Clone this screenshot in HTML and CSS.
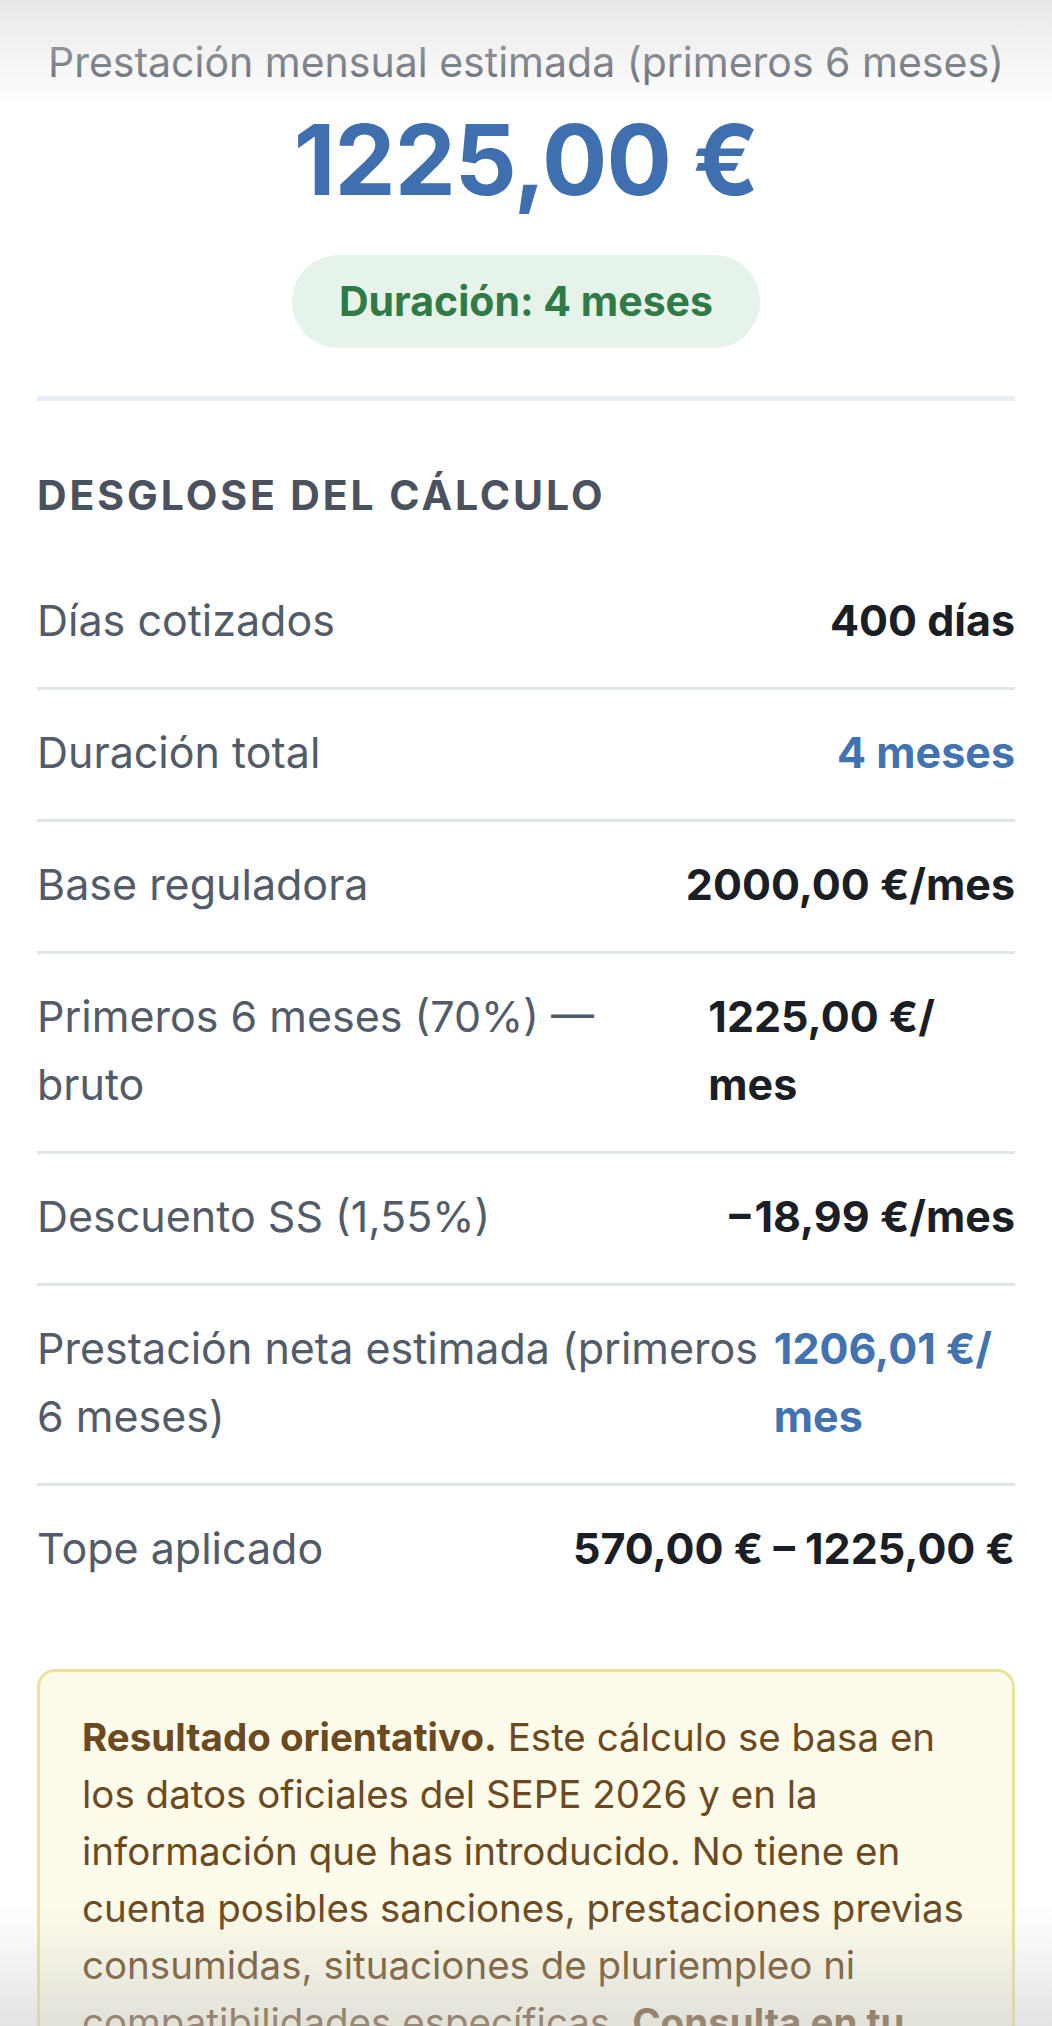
FILE: index.html
```html
<!DOCTYPE html>
<html lang="es">
<head>
  <meta charset="UTF-8">
  <meta name="viewport" content="width=device-width, initial-scale=1.0">
  <title>Resultado prestación por desempleo</title>
  <link rel="stylesheet" href="styles.css">
</head>
<body>
  <main class="result">
    <!-- Resumen principal -->
    <section class="summary">
      <p class="summary-label">Prestación mensual estimada (primeros 6 meses)</p>
      <p class="summary-amount">1225,00&nbsp;€</p>
      <span class="badge">Duración: 4 meses</span>
    </section>

    <hr class="divider">

    <!-- Desglose -->
    <section class="breakdown">
      <h2>Desglose del cálculo</h2>
      <div class="row">
        <span class="row-label">Días cotizados</span>
        <span class="row-value">400 días</span>
      </div>
      <div class="row">
        <span class="row-label">Duración total</span>
        <span class="row-value accent">4 meses</span>
      </div>
      <div class="row">
        <span class="row-label">Base reguladora</span>
        <span class="row-value">2000,00&nbsp;€/<wbr>mes</span>
      </div>
      <div class="row">
        <span class="row-label">Primeros 6 meses (70%) — bruto</span>
        <span class="row-value">1225,00&nbsp;€/<wbr>mes</span>
      </div>
      <div class="row">
        <span class="row-label">Descuento SS (1,55%)</span>
        <span class="row-value">−18,99&nbsp;€/<wbr>mes</span>
      </div>
      <div class="row">
        <span class="row-label">Prestación neta estimada (primeros 6 meses)</span>
        <span class="row-value accent">1206,01&nbsp;€/<wbr>mes</span>
      </div>
      <div class="row">
        <span class="row-label">Tope aplicado</span>
        <span class="row-value">570,00&nbsp;€ – 1225,00&nbsp;€</span>
      </div>
    </section>

    <div class="notice">
      <p><strong>Resultado orientativo.</strong> Este cálculo se basa en los datos oficiales del SEPE 2026 y en la información que has introducido. No tiene en cuenta posibles sanciones, prestaciones previas consumidas, situaciones de pluriempleo ni compatibilidades específicas. <strong>Consulta en tu oficina del SEPE</strong> antes de tomar decisiones.</p>
    </div>
  </main>

  <div class="fade fade-top"></div>
  <div class="fade fade-bottom"></div>
</body>
</html>
```

FILE: styles.css
```css
body {
  font-family: Inter, "Noto Sans", sans-serif;
  margin: 0;
  padding: 0;
  background-color: #fff;
  color: #1b1e24;
}
.result {
  padding: 0 37px 120px;
}
.summary {
  text-align: center;
  padding-top: 37px;
}
.summary-label {
  margin: 0;
  font-size: 41px;
  line-height: 50px;
  color: #535b68;
}
.summary-amount {
  margin: 15px 0 0;
  font-size: 97px;
  line-height: 116px;
  font-weight: 700;
  color: #3f6fae;
  letter-spacing: -1px;
}
.badge {
  display: inline-block;
  margin-top: 37px;
  padding: 0 47px;
  height: 93px;
  line-height: 93px;
  border-radius: 47px;
  background-color: #e6f3ea;
  color: #2f7a46;
  font-size: 41px;
  font-weight: 700;
}
.divider {
  margin: 48px 0 0;
  border: 0;
  height: 5px;
  background-color: #e8eef4;
}
.breakdown h2 {
  margin: 68px 0 37px;
  font-size: 41px;
  line-height: 52px;
  font-weight: 700;
  text-transform: uppercase;
  letter-spacing: 2.9px;
  color: #4b525e;
}
.row {
  display: flex;
  justify-content: space-between;
  gap: 14px;
  padding: 28px 0 33px;
  font-size: 43px;
  line-height: 68px;
  border-bottom: 3px solid #e2e5e9;
}
.row:last-child {
  border-bottom: 0;
}
.row-label {
  color: #535b68;
}
.row-value {
  font-weight: 700;
  color: #1b1e24;
}
.row-value.accent {
  color: #4272b0;
}
.notice {
  margin-top: 54px;
  padding: 37px 42px 34px;
  border: 3px solid #ece29c;
  border-radius: 18px;
  background-color: #fdfbea;
  color: #6b4a22;
  font-size: 38.5px;
  line-height: 57px;
}
.notice p {
  margin: 0;
}
.fade {
  position: fixed;
  left: 0;
  right: 0;
  pointer-events: none;
}
.fade-top {
  top: 0;
  height: 110px;
  background: linear-gradient(to bottom, rgba(225, 225, 225, 0.75), rgba(255, 255, 255, 0));
}
.fade-bottom {
  bottom: 0;
  height: 120px;
  background: linear-gradient(to top, rgba(200, 200, 200, 0.5), rgba(255, 255, 255, 0));
}
```
